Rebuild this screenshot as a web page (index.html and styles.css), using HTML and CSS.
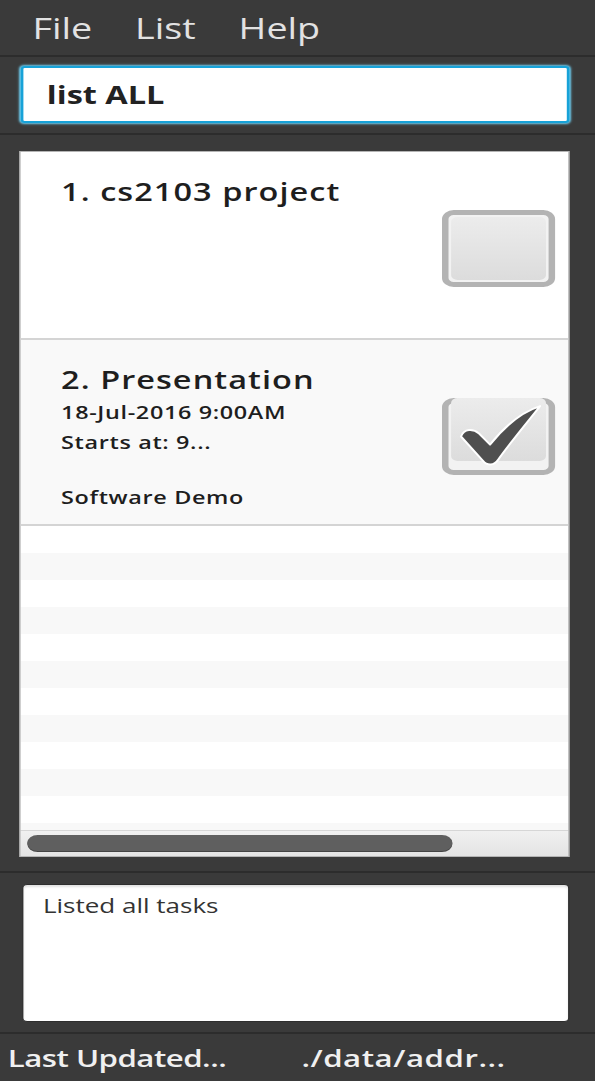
FILE: index.html
```html
<!DOCTYPE html>
<html lang="en">
<head>
<meta charset="utf-8">
<title>Task Manager</title>
<link rel="stylesheet" href="styles.css">
</head>
<body>
<div class="app">
  <nav class="menubar">
    <span class="menu-item">File</span>
    <span class="menu-item">List</span>
    <span class="menu-item">Help</span>
  </nav>

  <section class="command-area">
    <div class="command-box">list ALL</div>
  </section>

  <section class="list-area">
    <div class="list-panel">
      <div class="card card-first">
        <div class="card-text">
          <div class="card-title">1. cs2103 project</div>
        </div>
        <div class="checkbox">
          <div class="checkbox-inner"></div>
        </div>
      </div>
      <div class="card card-alt">
        <div class="card-text">
          <div class="card-title">2. Presentation</div>
          <div class="card-line">18-Jul-2016 9:00AM</div>
          <div class="card-line">Starts at: 9...</div>
          <div class="card-line card-desc">Software Demo</div>
        </div>
        <div class="checkbox">
          <div class="checkbox-inner">
            <svg class="check" viewBox="0 0 113 76" preserveAspectRatio="none">
              <path d="M19,38 C22,30 31,30 37,35 L48,46 C61,30 79,14 98,8 C86,23 69,43 56,61 C52,67 45,67 41,62 Z" fill="#4f4f4f" stroke="#ffffff" stroke-width="2" stroke-linejoin="round"/>
            </svg>
          </div>
        </div>
      </div>
      <div class="list-filler"></div>
      <div class="hscroll">
        <div class="hscroll-thumb"></div>
      </div>
    </div>
  </section>

  <section class="result-area">
    <div class="result-box">Listed all tasks</div>
  </section>

  <footer class="statusbar">
    <span class="status-item status-updated">Last Updated...</span>
    <span class="status-item status-path">./data/addr...</span>
  </footer>
</div>
</body>
</html>
```

FILE: styles.css
```css
html, body {
  margin: 0;
  padding: 0;
  background: #3a3a3a;
  overflow: hidden;
}

.app {
  width: calc(595px / 1.3);
  height: 1081px;
  transform: scaleX(1.3);
  transform-origin: 0 0;
  background: #3a3a3a;
  font-family: "Open Sans", "Noto Sans", sans-serif;
  display: flex;
  flex-direction: column;
}

.menubar {
  height: 57px;
  flex: none;
  box-sizing: border-box;
  border-bottom: 2px solid #2c2c2c;
  display: flex;
  padding-left: 25px;
  gap: 33px;
}

.menu-item {
  font-size: 29px;
  line-height: 55px;
  color: #e2e2e2;
}

.command-area {
  height: 78px;
  flex: none;
  box-sizing: border-box;
  padding: 9px 20px 10px 16px;
  border-bottom: 2px solid #2c2c2c;
}

.command-box {
  height: 57px;
  box-sizing: border-box;
  background: #ffffff;
  border: 2px solid #17a2d8;
  border-radius: 3px;
  box-shadow: 0 0 2px 1px #6fcff2;
  padding-left: 18px;
  font-size: 25px;
  font-weight: 700;
  line-height: 53px;
  color: #222222;
}

.list-area {
  height: 738px;
  flex: none;
  box-sizing: border-box;
  padding: 16px 20px 14px 15px;
  border-bottom: 2px solid #2c2c2c;
}

.list-panel {
  height: 100%;
  box-sizing: border-box;
  border: 1px solid #b4b4b4;
  background: #ffffff;
  display: flex;
  flex-direction: column;
}

.card {
  display: flex;
  align-items: flex-start;
  height: 186px;
  flex: none;
  box-sizing: border-box;
  border-bottom: 2px solid #d4d4d4;
  background: #ffffff;
  padding: 23px 10px 0 31px;
}

.card-first {
  height: 188px;
}

.card-alt {
  background: #f9f9f9;
}

.card-text {
  flex: 1;
  color: #1e1e1e;
}

.card-title {
  font-size: 25px;
  font-weight: 600;
  line-height: 32px;
  letter-spacing: 0.8px;
  margin-bottom: 2px;
}

.card-line {
  font-size: 18px;
  font-weight: 600;
  line-height: 30px;
  letter-spacing: 0.5px;
}

.card-desc {
  margin-top: 25px;
}

.checkbox {
  width: 87px;
  height: 77px;
  flex: none;
  box-sizing: border-box;
  border: 5px solid #b3b3b3;
  border-radius: 9px;
  background: #f2f2f2;
  padding: 2px;
  margin-top: 35px;
}

.checkbox-inner {
  height: 100%;
  border-radius: 5px;
  background: linear-gradient(#ececec, #dcdcdc);
}

.check {
  display: block;
  width: 87px;
  height: 77px;
  margin: -7px 0 0 -7px;
}

.list-filler {
  flex: 1;
  background: repeating-linear-gradient(
    to bottom,
    #ffffff 0,
    #ffffff 27px,
    #f8f8f8 27px,
    #f8f8f8 54px
  );
}

.hscroll {
  height: 26px;
  flex: none;
  box-sizing: border-box;
  border-top: 1px solid #d6d6d6;
  background: linear-gradient(#f0f0f0, #e4e4e4);
  padding: 4px 0 0 5px;
}

.hscroll-thumb {
  width: 327px;
  height: 16px;
  border-radius: 8px;
  background: #5f5f5f;
  box-shadow: 0 1px 0 #444444;
}

.result-area {
  height: 161px;
  flex: none;
  box-sizing: border-box;
  padding: 11px 20px 10px 17px;
  border-bottom: 2px solid #2c2c2c;
}

.result-box {
  height: 100%;
  box-sizing: border-box;
  background: #ffffff;
  border: 1px solid #2e2e2e;
  border-radius: 4px;
  box-shadow: inset 0 2px 2px rgba(0, 0, 0, 0.12);
  padding: 8px 0 0 15px;
  font-size: 20px;
  line-height: 26px;
  color: #333333;
}

.statusbar {
  flex: 1;
  display: grid;
  grid-template-columns: 1fr 1fr;
  padding-left: 6px;
}

.status-item {
  font-size: 24px;
  font-weight: 600;
  line-height: 47px;
  color: #f0f0f0;
}

.status-updated {
  letter-spacing: -0.4px;
}

.status-path {
  letter-spacing: 0.4px;
}
```
